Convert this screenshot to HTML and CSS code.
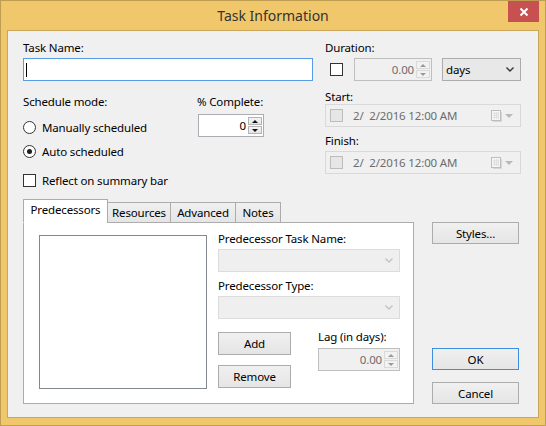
FILE: index.html
```html
<!DOCTYPE html>
<html lang="en">
<head>
  <meta charset="UTF-8" />
  <title>Task Information</title>
  <link rel="stylesheet" href="styles.css">
</head>
<body>
  <div class="window">
    <div class="titlebar">
      <span></span>
      <span class="title">Task Information</span>
      <span class="close-btn">
        <svg width="10" height="10" viewBox="0 0 10 10"><path d="M1.5 1.5 L8.5 8.5 M8.5 1.5 L1.5 8.5" stroke="#fff" stroke-width="2"/></svg>
      </span>
    </div>

    <div class="client">
      <div class="top">
        <div class="main-col">
          <div class="lbl">Task Name:</div>
          <div class="textbox focused"><span class="caret"></span></div>

          <div class="sched">
            <div class="sched-mode">
              <div class="lbl">Schedule mode:</div>
              <div class="opt first"><span class="radio"></span>Manually scheduled</div>
              <div class="opt"><span class="radio on"></span>Auto scheduled</div>
            </div>
            <div class="pct">
              <div class="lbl">% Complete:</div>
              <div class="spin pct-spin">
                <span class="val">0</span>
                <span class="spin-btns"><i class="up"></i><i class="down"></i></span>
              </div>
            </div>
          </div>

          <div class="opt summary"><span class="check"></span>Reflect on summary bar</div>
        </div>

        <div class="side-col">
          <div class="lbl">Duration:</div>
          <div class="dur-row">
            <span class="check"></span>
            <div class="spin dur-spin disabled">
              <span class="val">0.00</span>
              <span class="spin-btns"><i class="up"></i><i class="down"></i></span>
            </div>
            <div class="select days">
              <span>days</span>
              <svg width="8" height="5" viewBox="0 0 8 5"><path d="M0.5 0.5 L4 4 L7.5 0.5" fill="none" stroke="#333" stroke-width="1.4"/></svg>
            </div>
          </div>

          <div class="lbl start-lbl">Start:</div>
          <div class="datebox">
            <span class="check off"></span>
            <span class="date">2/  2/2016 12:00 AM</span>
            <svg class="cal" width="11" height="12" viewBox="0 0 11 12">
              <rect x="0.5" y="0.5" width="9" height="10" fill="#f6f6f6" stroke="#bdbdbd"/>
              <path d="M10.5 2 V11.5 H2" fill="none" stroke="#d6d6d6"/>
              <path d="M2 3.5 H8 M2 5.5 H8 M2 7.5 H8 M3.5 2 V9 M5.5 2 V9 M7.5 2 V9" stroke="#e0e0e0"/>
            </svg>
            <span class="drop"></span>
          </div>

          <div class="lbl finish-lbl">Finish:</div>
          <div class="datebox">
            <span class="check off"></span>
            <span class="date">2/  2/2016 12:00 AM</span>
            <svg class="cal" width="11" height="12" viewBox="0 0 11 12">
              <rect x="0.5" y="0.5" width="9" height="10" fill="#f6f6f6" stroke="#bdbdbd"/>
              <path d="M10.5 2 V11.5 H2" fill="none" stroke="#d6d6d6"/>
              <path d="M2 3.5 H8 M2 5.5 H8 M2 7.5 H8 M3.5 2 V9 M5.5 2 V9 M7.5 2 V9" stroke="#e0e0e0"/>
            </svg>
            <span class="drop"></span>
          </div>
        </div>
      </div>

      <div class="bottom">
        <div class="tabs">
          <div class="tab-strip">
            <span class="tab active tab-pred">Predecessors</span>
            <span class="tab tab-res">Resources</span>
            <span class="tab tab-adv">Advanced</span>
            <span class="tab tab-notes">Notes</span>
          </div>
          <div class="tab-panel">
            <div class="listbox"></div>
            <div class="pred-fields">
              <div class="lbl">Predecessor Task Name:</div>
              <div class="combo disabled">
                <svg width="8" height="5" viewBox="0 0 8 5"><path d="M0.5 0.5 L4 4 L7.5 0.5" fill="none" stroke="#c2c2c2" stroke-width="1.3"/></svg>
              </div>
              <div class="lbl type-lbl">Predecessor Type:</div>
              <div class="combo disabled">
                <svg width="8" height="5" viewBox="0 0 8 5"><path d="M0.5 0.5 L4 4 L7.5 0.5" fill="none" stroke="#c2c2c2" stroke-width="1.3"/></svg>
              </div>
              <div class="pred-actions">
                <div class="btn-col">
                  <button class="btn">Add</button>
                  <button class="btn remove">Remove</button>
                </div>
                <div class="lag">
                  <div class="lbl">Lag (in days):</div>
                  <div class="spin lag-spin disabled">
                    <span class="val">0.00</span>
                    <span class="spin-btns"><i class="up"></i><i class="down"></i></span>
                  </div>
                </div>
              </div>
            </div>
          </div>
        </div>

        <div class="dialog-btns">
          <button class="btn styles">Styles...</button>
          <button class="btn ok">OK</button>
          <button class="btn cancel">Cancel</button>
        </div>
      </div>
    </div>
  </div>
</body>
</html>
```

FILE: styles.css
```css
* {
  margin: 0;
  padding: 0;
  box-sizing: border-box;
}
body {
  font-family: 'Segoe UI', 'Noto Sans', sans-serif;
  font-size: 11.5px;
  letter-spacing: -0.15px;
  color: #000;
  background: #fff;
}
.window {
  width: 546px;
  height: 426px;
  background: #f0c86b;
  border: 1px solid #bf9e54;
  display: flex;
  flex-direction: column;
}
.titlebar {
  height: 29px;
  display: grid;
  grid-template-columns: 1fr auto 1fr;
}
.title {
  font-size: 14px;
  letter-spacing: 0;
  line-height: 29px;
  color: #333;
}
.close-btn {
  justify-self: end;
  width: 31px;
  height: 21px;
  margin-right: 6px;
  background: #c75050;
  display: flex;
  align-items: center;
  justify-content: center;
}
.client {
  flex: 1;
  margin: 0 6px 7px;
  background: #f0f0f0;
  border: 1px solid #c9a659;
  padding: 9px 0 0 15px;
}
.lbl {
  line-height: 15px;
  height: 15px;
  white-space: nowrap;
}

/* top section */
.top {
  display: flex;
}
.main-col {
  width: 290px;
  margin-right: 12px;
}
.textbox {
  margin-top: 3px;
  height: 23px;
  background: #fff;
  border: 1px solid #abadb3;
  padding: 4px 2px;
}
.textbox.focused {
  border-color: #569de5;
}
.caret {
  display: block;
  width: 1px;
  height: 14px;
  background: #000;
}
.sched {
  display: flex;
  margin-top: 13px;
}
.sched-mode {
  width: 174px;
}
.opt {
  display: flex;
  align-items: center;
  height: 24px;
  white-space: nowrap;
}
.opt.first {
  margin-top: 6px;
}
.opt.summary {
  margin-top: 5px;
}
.radio {
  width: 13px;
  height: 13px;
  border: 1px solid #333;
  border-radius: 50%;
  background: #fff;
  margin-right: 6px;
  display: flex;
  align-items: center;
  justify-content: center;
}
.radio.on::after {
  content: '';
  width: 5px;
  height: 5px;
  border-radius: 50%;
  background: #1e1e1e;
}
.check {
  width: 13px;
  height: 13px;
  border: 1px solid #333;
  background: #fff;
  margin-right: 6px;
  flex: none;
}
.check.off {
  background: #e6e6e6;
  border-color: #bcbcbc;
}
.pct .spin {
  margin-top: 5px;
  margin-left: 1px;
}

/* spinners */
.spin {
  height: 23px;
  display: flex;
  align-items: center;
  background: #fff;
  border: 1px solid #abadb3;
  padding: 1px;
}
.spin .val {
  flex: 1;
  text-align: right;
  padding-right: 2px;
}
.spin-btns {
  display: flex;
  flex-direction: column;
  gap: 1px;
  align-self: stretch;
  padding: 1px 0;
}
.spin-btns i {
  flex: 1;
  width: 14px;
  border: 1px solid #b4b4b4;
  background: linear-gradient(#f4f4f4, #e4e4e4);
  display: flex;
  align-items: center;
  justify-content: center;
}
.spin-btns i::before {
  content: '';
  border-left: 3px solid transparent;
  border-right: 3px solid transparent;
}
.spin-btns i.up::before {
  border-bottom: 3px solid #111;
}
.spin-btns i.down::before {
  border-top: 3px solid #111;
}
.spin.disabled {
  background: #f0f0f0;
  border-color: #bfbfbf;
  color: #6d6d6d;
}
.spin.disabled .spin-btns i {
  border-color: #dadada;
  background: #f2f2f2;
}
.spin.disabled .spin-btns i.up::before {
  border-bottom-color: #9a9a9a;
}
.spin.disabled .spin-btns i.down::before {
  border-top-color: #9a9a9a;
}
.pct-spin {
  width: 66px;
}

/* right column */
.side-col {
  width: 196px;
}
.dur-row {
  display: flex;
  align-items: center;
  height: 23px;
  margin-top: 3px;
}
.dur-row .check {
  margin: 0 0 0 5px;
}
.dur-spin {
  width: 78px;
  margin-left: 11px;
}
.select {
  height: 23px;
  display: flex;
  align-items: center;
  justify-content: space-between;
  border: 1px solid #acacac;
  background: #e8e8e8;
  padding: 0 6px 0 3px;
}
.days {
  width: 79px;
  margin-left: 10px;
}
.start-lbl {
  margin-top: 8px;
}
.finish-lbl {
  margin-top: 6px;
  margin-bottom: 3px;
}
.datebox {
  height: 23px;
  display: flex;
  align-items: center;
  border: 1px solid #d9d9d9;
  background: #f0f0f0;
  padding-left: 4px;
  color: #6d6d6d;
}
.datebox .check {
  margin-right: 10px;
}
.date {
  white-space: pre;
  flex: 1;
}
.cal {
  margin-right: 3px;
}
.drop {
  width: 0;
  height: 0;
  border-left: 4px solid transparent;
  border-right: 4px solid transparent;
  border-top: 4px solid #b9b9b9;
  margin-right: 7px;
}

/* tabs */
.bottom {
  display: flex;
  margin-top: 7px;
}
.tabs {
  width: 391px;
}
.tab-strip {
  display: flex;
  align-items: flex-end;
  height: 24px;
  margin-bottom: -1px;
  position: relative;
  z-index: 1;
}
.tab {
  height: 21px;
  border: 1px solid #acacac;
  background: linear-gradient(#f0f0f0, #e5e5e5);
  padding-top: 2px;
  line-height: 15px;
  text-align: center;
  margin-left: -1px;
  white-space: nowrap;
}
.tab.active {
  height: 24px;
  margin-left: 0;
  background: #fff;
  border-bottom-color: #fff;
}
.tab-pred { width: 85px; }
.tab-res { width: 64px; }
.tab-adv { width: 66px; }
.tab-notes { width: 46px; }
.tab-panel {
  height: 182px;
  background: #fff;
  border: 1px solid #acacac;
  padding: 12px 0 0 15px;
  display: flex;
}
.listbox {
  width: 168px;
  height: 154px;
  border: 1px solid #828790;
  background: #fff;
}
.pred-fields {
  width: 182px;
  margin-left: 11px;
  margin-top: -4px;
}
.combo {
  height: 23px;
  margin-top: 3px;
  display: flex;
  align-items: center;
  justify-content: flex-end;
  padding-right: 6px;
}
.combo.disabled {
  background: #efefef;
  border: 1px solid #dcdcdc;
}
.type-lbl {
  margin-top: 6px;
}
.pred-actions {
  display: flex;
  margin-top: 13px;
}
.btn-col {
  display: flex;
  flex-direction: column;
  gap: 10px;
}
.btn {
  width: 73px;
  height: 23px;
  border: 1px solid #acacac;
  background: linear-gradient(#f0f0f0, #e5e5e5);
  font-family: inherit;
  font-size: 11.5px;
  letter-spacing: -0.15px;
  color: #000;
}
.lag {
  margin-left: 27px;
  margin-top: -3px;
}
.lag-spin {
  width: 82px;
  margin-top: 4px;
}

/* dialog buttons */
.dialog-btns {
  display: flex;
  flex-direction: column;
  margin-left: 18px;
}
.dialog-btns .btn {
  width: 87px;
  height: 22px;
}
.styles {
  margin-top: 23px;
}
.ok {
  margin-top: 104px;
  border-color: #3c8fe0;
}
.cancel {
  margin-top: 12px;
}
```
